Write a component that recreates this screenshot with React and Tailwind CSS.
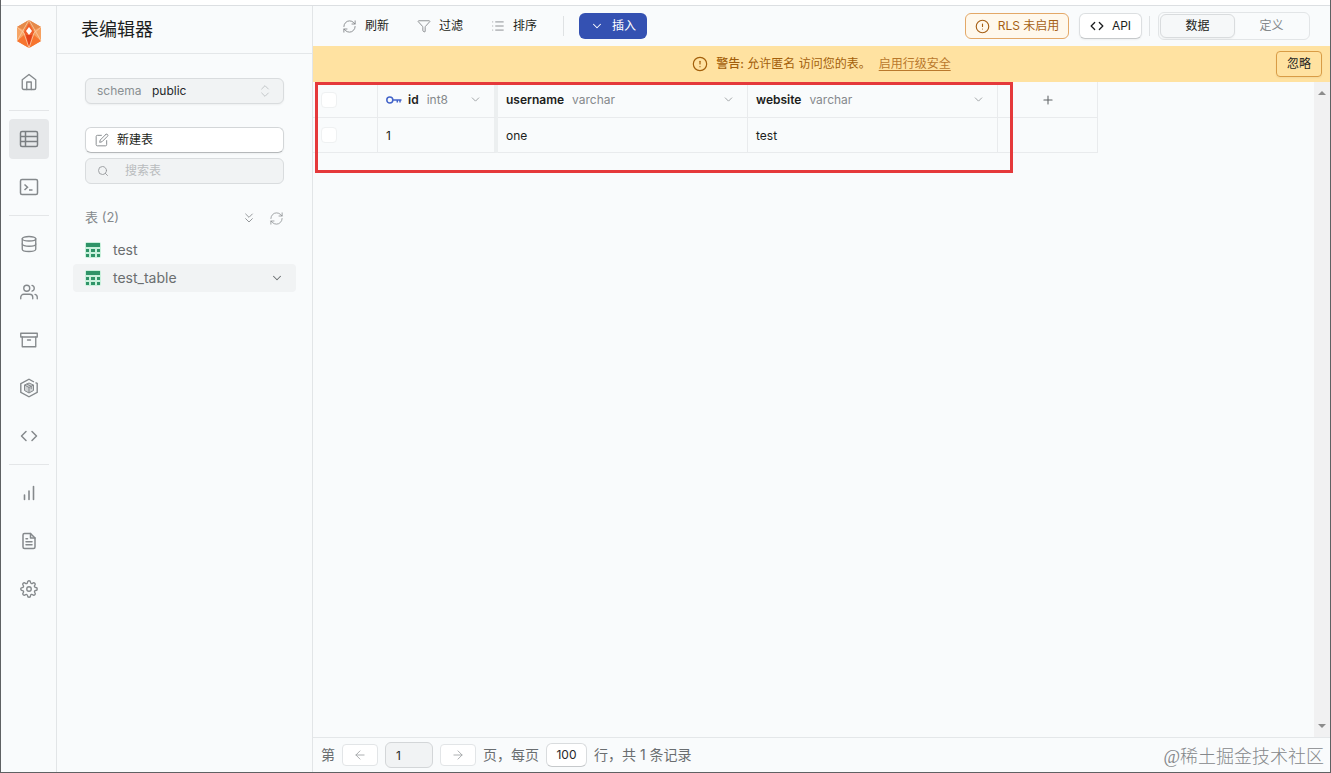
import {
  ArrowLeft,
  ArrowRight,
  ChevronDown,
  ChevronsDown,
  ChevronsUpDown,
  Filter,
  List,
  Plus,
  RefreshCw,
  Search,
} from 'lucide-react';
import {
  FiAlertCircle,
  FiArchive,
  FiCode,
  FiDatabase,
  FiEdit,
  FiFileText,
  FiHome,
  FiSettings,
  FiUsers,
} from 'react-icons/fi';

const Logo = () => (
  <svg className="h-7 w-7" viewBox="0 0 28 28">
    <path d="M14 0L26 7V21L14 28L2 21V7Z" fill="#f58a48" />
    <path d="M14 0L26 7L19 10L14 3L9 10L2 7Z" fill="#e58a4a" />
    <path d="M2 7L9 10L9 17L2 21Z" fill="#f6a566" />
    <path d="M26 7L19 10L19 17L26 21Z" fill="#f6a05f" />
    <path d="M2 21L9 15L14 28Z" fill="#f7752f" />
    <path d="M26 21L19 15L14 28Z" fill="#f7752f" />
    <path d="M14 3L19 12L17 20L14 28L11 20L9 12Z" fill="#f0602b" />
    <path d="M11 15H17L14 27Z" fill="#e2431b" />
    <path
      d="M14 0L2 21M14 0L26 21M2 7L9 13L14 28L19 13L26 7"
      stroke="#fccba6"
      strokeWidth="0.8"
      fill="none"
    />
    <path d="M14 7L17 11L14 15L11 11Z" fill="#fff" />
  </svg>
);

const TableIcon = () => (
  <svg className="h-5 w-5" viewBox="0 0 20 20" fill="none" stroke="currentColor" strokeWidth="1.5">
    <rect x="1.500" y="2.500" width="17" height="15" rx="1.500" />
    <path d="M1.500 7.500H18.500M1.500 12.500H18.500M6.500 2.500V17.500" />
  </svg>
);

const TerminalIcon = () => (
  <svg className="h-5 w-5" viewBox="0 0 20 20" fill="none" stroke="currentColor" strokeWidth="1.5">
    <rect x="1.500" y="2.500" width="17" height="15" rx="1.500" />
    <path d="M5.500 7.500L8.500 10.200L5.500 13M10 13H13.500" />
  </svg>
);

const FunctionsIcon = () => (
  <svg className="h-5 w-5" viewBox="0 0 20 20" fill="none" stroke="currentColor" strokeWidth="1.4">
    <path d="M15 4L10 1.200L1.800 5.700V14.300L10 18.800L18.200 14.300V5.500L16.500 4.600" />
    <path d="M10 5L14.500 7V12.500L10 15L5.500 12.500V7Z" fill="currentColor" fillOpacity="0.35" strokeWidth="1" />
    <path d="M5.500 7L10 9.500L14.500 7M10 9.500V15M7.700 6L12.200 8.300V11" strokeWidth="1" />
  </svg>
);

const BarsIcon = () => (
  <svg className="h-5 w-5" viewBox="0 0 20 20" fill="none" stroke="currentColor" strokeWidth="1.6">
    <path d="M5.500 12V16.500M10 8V16.500M14.500 3.500V16.500" strokeLinecap="round" />
  </svg>
);

const KeyIcon = () => (
  <svg className="h-4 w-4" viewBox="0 0 16 16" fill="none" stroke="#4263c9" strokeWidth="1.5">
    <circle cx="3.800" cy="8" r="3" />
    <path d="M7 8H15.500M11.300 8V10.500M14 8V10.500" />
  </svg>
);

const SheetIcon = () => (
  <svg className="h-4 w-4" viewBox="0 0 16 16">
    <rect width="16" height="16" rx="2" fill="#c9f0dc" />
    <path
      d="M1 1H15V5H1ZM1 7H4V10H1ZM6 7H10V10H6ZM12 7H15V10H12ZM1 12H4V15H1ZM6 12H10V15H6ZM12 12H15V15H12Z"
      fill="#2f9468"
    />
  </svg>
);

const railGroups = [
  [{ label: '首页', icon: <FiHome size={18} strokeWidth={1.8} /> }],
  [
    { label: '表编辑器', icon: <TableIcon />, active: true },
    { label: 'SQL', icon: <TerminalIcon /> },
  ],
  [
    { label: '数据库', icon: <FiDatabase size={18} strokeWidth={1.8} /> },
    { label: '用户', icon: <FiUsers size={18} strokeWidth={1.8} /> },
    { label: '存储', icon: <FiArchive size={18} strokeWidth={1.8} /> },
    { label: '函数', icon: <FunctionsIcon /> },
    { label: 'API', icon: <FiCode size={18} strokeWidth={2} /> },
  ],
  [
    { label: '报表', icon: <BarsIcon /> },
    { label: '日志', icon: <FiFileText size={18} strokeWidth={2} /> },
    { label: '设置', icon: <FiSettings size={18} strokeWidth={1.8} /> },
  ],
];

const columns = [
  { name: 'id', type: 'int8', primary: true, value: '1' },
  { name: 'username', type: 'varchar', value: 'one' },
  { name: 'website', type: 'varchar', value: 'test' },
];

const tables = [{ name: 'test' }, { name: 'test_table', selected: true }];

const NavRail = () => (
  <nav className="flex w-14 shrink-0 flex-col gap-2 border-r border-[#e2e5e7] py-2 pl-2 text-[#85898c]">
    <a href="#home" aria-label="Home" className="flex h-10 w-10 items-center justify-center">
      <Logo />
    </a>
    {railGroups.map((group, index) => (
      <div key={index} className="flex flex-col gap-2">
        {index > 0 && <div className="h-px w-10 bg-[#e4e6e8]" />}
        {group.map((item) => (
          <a
            key={item.label}
            href="#"
            aria-label={item.label}
            className={`flex h-10 w-10 items-center justify-center rounded-sm ${
              item.active ? 'bg-[#e6e8ea] text-[#7b7f82]' : ''
            }`}
          >
            {item.icon}
          </a>
        ))}
      </div>
    ))}
  </nav>
);

const Sidebar = () => (
  <aside className="flex w-64 shrink-0 flex-col border-r border-[#e2e5e7]">
    <div className="flex h-12 items-center border-b border-[#e4e7e9] pl-6">
      <h1 className="text-lg text-[#1c1e20]">表编辑器</h1>
    </div>

    <div className="flex flex-col px-7 pt-6">
      <label className="relative flex h-[26px] items-center rounded-md border border-[#d9dcde] bg-[#f1f3f4] text-xs shadow-xs">
        <span className="w-[66px] pl-[11px] text-[#899092]">schema</span>
        <select className="flex-1 appearance-none bg-transparent text-[#25282a] outline-none">
          <option>public</option>
        </select>
        <ChevronsUpDown size={16} strokeWidth={1.5} className="absolute right-2.5 text-[#c3c7c9]" />
      </label>

      <button className="mt-[23px] flex h-[26px] items-center gap-2 rounded-md border border-[#d3d6d8] border-b-[#b5b8ba] bg-white pl-[9px] text-xs text-[#1c1e20] shadow-xs">
        <FiEdit size={14} strokeWidth={1.7} className="text-[#8b8f92]" />
        新建表
      </button>

      <label className="mt-[5px] flex h-[26px] items-center gap-4 rounded-md border border-[#d9dcde] bg-[#f1f3f4] pl-[11px] text-xs">
        <Search size={12} strokeWidth={1.8} className="shrink-0 text-[#96999c]" />
        <input
          aria-label="搜索表"
          placeholder="搜索表"
          className="w-full bg-transparent outline-none placeholder:text-[#b9bcbe]"
        />
      </label>

      <div className="mt-[23px] flex h-[22px] items-center text-[13px] text-[#85898c]">
        <span className="flex-1">表 (2)</span>
        <button aria-label="排序" className="mr-3">
          <ChevronsDown size={16} strokeWidth={1.3} />
        </button>
        <button aria-label="刷新">
          <RefreshCw size={15} strokeWidth={1.2} />
        </button>
      </div>
    </div>

    <ul className="mt-[7px] px-4">
      {tables.map((table) => (
        <li
          key={table.name}
          className={`flex h-7 items-center rounded-sm px-3 text-sm text-[#6a6e70] ${
            table.selected ? 'bg-[#f1f3f4]' : ''
          }`}
        >
          <a href="#" className="flex flex-1 items-center gap-3">
            <SheetIcon />
            {table.name}
          </a>
          {table.selected && <ChevronDown size={14} strokeWidth={1.8} />}
        </li>
      ))}
    </ul>
  </aside>
);

const Toolbar = () => (
  <div className="flex h-10 shrink-0 items-center pr-5 pl-[29px] text-xs text-[#1c1e20]">
    <button className="flex items-center gap-2">
      <RefreshCw size={15} strokeWidth={1.4} className="text-[#808487]" />
      刷新
    </button>
    <button className="ml-7 flex items-center gap-2">
      <Filter size={14} strokeWidth={1.5} className="text-[#808487]" />
      过滤
    </button>
    <button className="ml-7 flex items-center gap-2">
      <List size={14} strokeWidth={1.5} className="text-[#808487]" />
      排序
    </button>
    <div className="ml-[26px] h-5 w-px bg-[#dfe2e4]" />
    <button className="ml-[15px] flex h-[26px] w-[68px] items-center justify-center gap-2 rounded-md bg-[#3451b2] text-white">
      <ChevronDown size={14} strokeWidth={1.8} />
      插入
    </button>

    <button className="ml-auto flex h-[26px] w-[104px] items-center justify-center gap-2 rounded-md border border-[#e3a868] bg-[#fff8ec] text-[#a65f14]">
      <FiAlertCircle size={15} strokeWidth={1.8} />
      RLS 未启用
    </button>
    <button className="ml-2.5 flex h-[26px] w-[63px] items-center justify-center gap-2 rounded-md border border-[#dcdfe1] border-b-[#c6c9cb] bg-white shadow-xs">
      <FiCode size={14} strokeWidth={2.2} />
      API
    </button>
    <div className="mr-2 ml-[7px] h-5 w-px bg-[#dfe2e4]" />
    <div className="flex h-7 w-[152px] rounded-md border border-[#e2e5e7] p-px">
      <button className="flex-1 rounded-md border border-[#d9dcde] bg-[#f6f8f9] shadow-xs">数据</button>
      <button className="flex-1 text-[#85898c]">定义</button>
    </div>
  </div>
);

const Banner = () => (
  <div className="relative flex h-9 shrink-0 items-center justify-center bg-[#ffe2a1] text-xs text-[#a35f0a]">
    <FiAlertCircle size={16} strokeWidth={1.8} className="mr-2" />
    <span>
      <b className="font-medium">警告:</b> 允许匿名 访问您的表。
    </span>
    <a href="#" className="ml-2 text-[#b9782c] underline underline-offset-2">
      启用行级安全
    </a>
    <button className="absolute right-2 h-[26px] w-[46px] rounded-sm border border-[#d99c45] text-[#1c1e20] shadow-xs">
      忽略
    </button>
  </div>
);

const RowCheckbox = ({ label }) => (
  <input
    type="checkbox"
    aria-label={label}
    className="ml-2 block h-4 w-4 appearance-none rounded-sm border border-[#eff1f2] bg-white"
  />
);

const DataGrid = () => (
  <div className="relative min-w-0 flex-1">
    <table className="w-[785px] table-fixed border-separate border-spacing-0 text-left text-xs text-[#1c1e20]">
      <colgroup>
        <col className="w-[65px]" />
        <col className="w-[120px]" />
        <col className="w-[250px]" />
        <col className="w-[250px]" />
        <col className="w-[100px]" />
      </colgroup>
      <thead>
        <tr className="h-9">
          <th className="border-r border-b border-[#e9ebed] p-0">
            <RowCheckbox label="全选" />
          </th>
          {columns.map((column) => (
            <th
              key={column.name}
              className={`border-b border-[#e9ebed] p-0 ${
                column.primary ? 'border-r-4 border-r-[#eceff0]' : 'border-r'
              }`}
            >
              <div className="flex items-center pr-3 pl-2">
                {column.primary && (
                  <span className="mr-1.5">
                    <KeyIcon />
                  </span>
                )}
                <span className="font-semibold">{column.name}</span>
                <span className="ml-2 flex-1 font-normal text-[#85898c]">{column.type}</span>
                <ChevronDown size={13} strokeWidth={1.8} className="text-[#a0a4a6]" />
              </div>
            </th>
          ))}
          <th className="border-r border-b border-[#e9ebed] p-0">
            <button aria-label="添加列" className="mx-auto block">
              <Plus size={14} strokeWidth={1.8} className="text-[#5f6365]" />
            </button>
          </th>
        </tr>
      </thead>
      <tbody>
        <tr className="h-[35px]">
          <td className="border-r border-b border-[#e9ebed] p-0">
            <RowCheckbox label="选择行" />
          </td>
          {columns.map((column) => (
            <td
              key={column.name}
              className={`border-b border-[#e9ebed] pt-0.5 pr-0 pb-0 pl-2 ${
                column.primary ? 'border-r-4 border-r-[#eceff0]' : 'border-r'
              }`}
            >
              {column.value}
            </td>
          ))}
          <td className="border-r border-b border-[#e9ebed] p-0" />
        </tr>
      </tbody>
    </table>

    {/* Highlight frame over the table */}
    <div className="pointer-events-none absolute top-0 left-0.5 h-[91px] w-[698px] border-3 border-[#e5393b]" />
  </div>
);

const ScrollBar = () => (
  <div className="flex w-4 shrink-0 flex-col items-center justify-between bg-[#f1f1f2] py-2">
    <svg className="h-1.5 w-2" viewBox="0 0 8 6" fill="#8c8c8c">
      <path d="M0 5L4 1L8 5Z" />
    </svg>
    <svg className="h-1.5 w-2" viewBox="0 0 8 6" fill="#8c8c8c">
      <path d="M0 1L4 5L8 1Z" />
    </svg>
  </div>
);

const Footer = () => (
  <footer className="flex h-[35px] shrink-0 items-center gap-[7px] border-t border-[#e4e7e9] pr-1.5 pl-2 text-sm text-[#6a6e70]">
    <span>第</span>
    <button
      aria-label="上一页"
      className="flex h-[22px] w-9 items-center justify-center rounded-sm border border-[#e2e5e7] bg-white text-[#a0a4a6]"
    >
      <ArrowLeft size={14} strokeWidth={1.5} />
    </button>
    <input
      aria-label="页码"
      defaultValue="1"
      className="h-[26px] w-12 rounded-md border border-[#d3d6d8] bg-[#f1f3f4] pl-2.5 text-xs text-[#25282a] outline-none"
    />
    <button
      aria-label="下一页"
      className="flex h-[22px] w-9 items-center justify-center rounded-sm border border-[#e2e5e7] bg-white text-[#a0a4a6]"
    >
      <ArrowRight size={14} strokeWidth={1.5} />
    </button>
    <span>页，每页</span>
    <button className="h-6 w-[41px] rounded-md border border-[#d9dcde] border-b-[#c6c9cb] bg-white text-xs text-[#25282a]">
      100
    </button>
    <span>行，共 1 条记录</span>
    <span className="ml-auto pt-1 font-['Liberation_Serif','Noto_Sans_CJK_SC',serif] text-lg font-light text-[#85888b]">
      @稀土掘金技术社区
    </span>
  </footer>
);

const App = () => (
  <div className="flex h-screen flex-col border-x border-b border-[#5f6163] bg-[#f9fbfc] font-['Inter','Noto_Sans_CJK_SC',sans-serif]">
    <div className="h-1.5 shrink-0 border-b border-[#dcdfe2] bg-white" />
    <div className="flex min-h-0 flex-1">
      <NavRail />
      <Sidebar />
      <main className="flex min-w-0 flex-1 flex-col">
        <Toolbar />
        <Banner />
        <div className="flex min-h-0 flex-1">
          <DataGrid />
          <ScrollBar />
        </div>
        <Footer />
      </main>
    </div>
  </div>
);

export default App;
